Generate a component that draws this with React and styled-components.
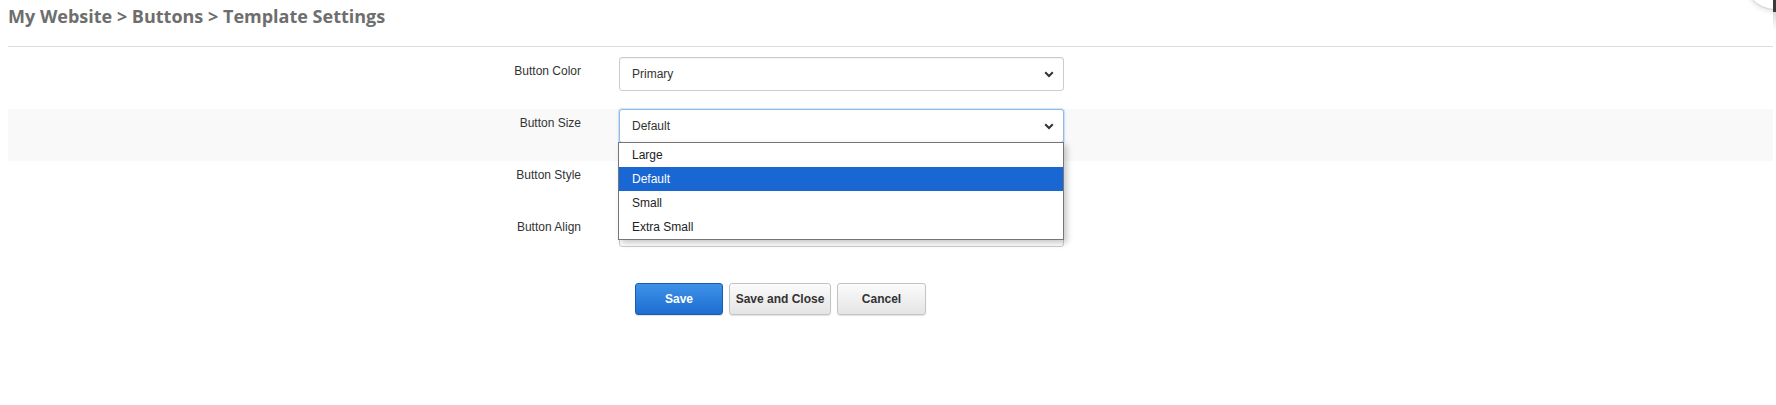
import React from "react";
import styled, { createGlobalStyle } from "styled-components";

const GlobalStyle = createGlobalStyle`
    html, body {
        margin: 0;
        padding: 0;
        background: #fff;
    }
    body {
        font-family: "Liberation Sans", Arial, sans-serif;
        color: #333;
    }
`

const Page = styled.div`
    position: relative;
    padding: 0 3px 0 8px;
    height: 405px;
    overflow: hidden;
`

const Breadcrumb = styled.h1`
    margin: 0;
    padding: 4px 0 18px;
    font-family: "Open Sans", sans-serif;
    font-size: 18px;
    font-weight: 700;
    line-height: 24px;
    color: #6e6e6e;
    border-bottom: 1px solid #dcdcdc;
`

// partly visible floating widget cut off at the top-right corner
const CornerWidget = styled.div`
    position: absolute;
    top: -52px;
    right: -30px;
    width: 60px;
    height: 60px;
    border-radius: 50%;
    border: 1px solid #d2d2d2;
    box-shadow: 0 2px 4px rgba(0,0,0,0.10);
    background: #fff;
`

const CornerBar = styled.div`
    position: absolute;
    top: 0;
    right: 0;
    width: 3px;
    height: 12px;
    background: #3a3a3a;

    &::after {
        content: "";
        position: absolute;
        top: 12px;
        left: 0;
        width: 3px;
        height: 18px;
        background: linear-gradient(#d8d8d8, rgba(255,255,255,0));
    }
`

const Form = styled.div`
    margin-top: 10px;
`

const Row = styled.div`
    display: grid;
    grid-template-columns: 573px 445px;
    column-gap: 38px;
    height: 52px;
    background: ${p => (p.$shaded ? "#f9f9f9" : "transparent")};
`

const Label = styled.div`
    text-align: right;
    padding-top: 7px;
    font-size: 12px;
    line-height: 14px;
    color: #333;
`

const SelectBox = styled.div`
    position: relative;
    height: 34px;
    box-sizing: border-box;
    display: flex;
    align-items: center;
    justify-content: space-between;
    padding: 0 9px 0 12px;
    background: #fff;
    border: 1px solid ${p => (p.$focused ? "#8cbbea" : "#cccccc")};
    border-radius: 3px;
    box-shadow: ${p => (p.$focused
        ? "0 0 0 1px rgba(140,187,234,0.35), 0 2px 4px rgba(0,0,0,0.08)"
        : "inset 0 1px 1px rgba(0,0,0,0.06)")};
    font-size: 12px;
    color: #333;
`

const Chevron = () => (
    <svg width="10" height="7" viewBox="0 0 10 7">
        <path d="M1.2 1.3 L5 5 L8.8 1.3" fill="none" stroke="#333" strokeWidth="2" />
    </svg>
)

const ListBox = styled.ul`
    position: absolute;
    top: 100%;
    left: -2px;
    width: 446px;
    box-sizing: border-box;
    margin: 0;
    padding: 0;
    list-style: none;
    background: #fff;
    border: 1px solid #767676;
    box-shadow: 3px 3px 6px rgba(0,0,0,0.22);
    z-index: 10;
`

const Option = styled.li`
    height: 24px;
    line-height: 25px;
    padding-left: 13px;
    font-size: 12px;
    color: ${p => (p.$active ? "#fff" : "#222")};
    background: ${p => (p.$active ? "#1967d2" : "#fff")};
`

const Actions = styled.div`
    display: flex;
    gap: 6px;
    margin: 18px 0 0 627px;
`

const Button = styled.button`
    height: 32px;
    padding: 0;
    width: ${p => p.$w}px;
    font-family: "Liberation Sans", Arial, sans-serif;
    font-size: 12px;
    font-weight: 700;
    border-radius: 3px;
    cursor: pointer;
    color: ${p => (p.$primary ? "#fff" : "#333")};
    border: 1px solid ${p => (p.$primary ? "#1b5dab" : "#c4c4c4")};
    background: ${p => (p.$primary
        ? "linear-gradient(#3f92e8, #1c6dd0)"
        : "linear-gradient(#fbfbfb, #e4e4e4)")};
    box-shadow: 0 1px 1px rgba(0,0,0,0.12);
`

const sizeOptions = ["Large", "Default", "Small", "Extra Small"];

export default function App() {
    return (
        <>
            <GlobalStyle />
            <Page>
                <CornerWidget />
                <CornerBar />
                <Breadcrumb>My Website &gt; Buttons &gt; Template Settings</Breadcrumb>
                <Form>
                    <Row>
                        <Label>Button Color</Label>
                        <SelectBox>
                            <span>Primary</span>
                            <Chevron />
                        </SelectBox>
                    </Row>
                    <Row $shaded>
                        <Label>Button Size</Label>
                        <SelectBox $focused>
                            <span>Default</span>
                            <Chevron />
                            <ListBox>
                                {sizeOptions.map(opt => (
                                    <Option key={opt} $active={opt === "Default"}>{opt}</Option>
                                ))}
                            </ListBox>
                        </SelectBox>
                    </Row>
                    <Row>
                        <Label>Button Style</Label>
                        <SelectBox>
                            <span />
                            <Chevron />
                        </SelectBox>
                    </Row>
                    <Row>
                        <Label>Button Align</Label>
                        <SelectBox>
                            <span />
                            <Chevron />
                        </SelectBox>
                    </Row>
                    <Actions>
                        <Button $primary $w={88}>Save</Button>
                        <Button $w={102}>Save and Close</Button>
                        <Button $w={89}>Cancel</Button>
                    </Actions>
                </Form>
            </Page>
        </>
    )
}
